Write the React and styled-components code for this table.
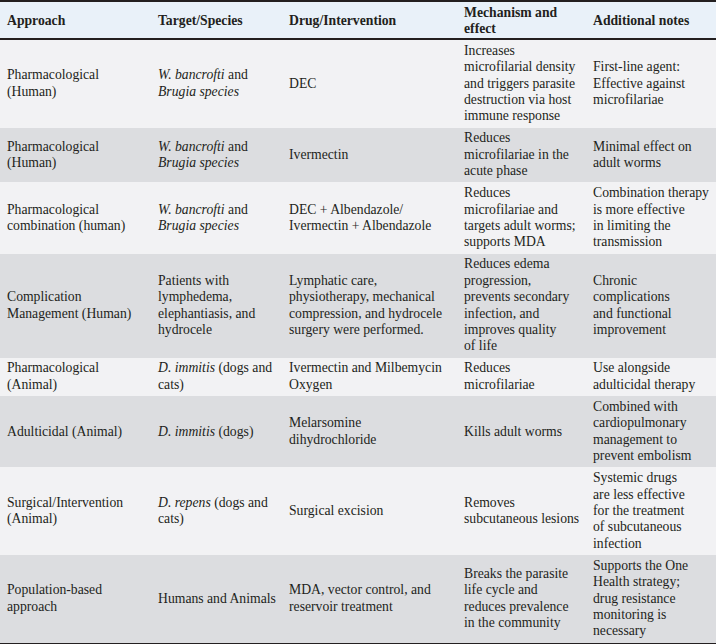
import React from "react";
import styled, { createGlobalStyle } from "styled-components";

const GlobalStyle = createGlobalStyle`
  html, body {
    margin: 0;
    padding: 0;
    background: #ffffff;
  }
`;

const COLUMNS = "151px 131px 175px 129px 130px";

const Table = styled.div`
  width: 716px;
  border-top: 2px solid #231f20;
  border-bottom: 3px solid #231f20;
  font-family: "Liberation Serif", "Times New Roman", Times, serif;
  font-size: 13.7px;
  line-height: 16.4px;
  color: #231f20;
`;

const HeadRow = styled.div`
  display: grid;
  grid-template-columns: ${COLUMNS};
  align-items: center;
  height: 36px;
  background: #e9f1f9;
  border-bottom: 2px solid #231f20;
  font-weight: 700;
`;

const Row = styled.div`
  display: grid;
  grid-template-columns: ${COLUMNS};
  align-items: center;
  background: ${props => (props.$shade ? "#dcdde0" : "#f2f2f4")};
`;

const Cell = styled.div`
  padding: 2.8px 7px;
  white-space: nowrap;
`;

const Em = styled.i`
  font-style: italic;
`;

const header = [
  "Approach",
  "Target/Species",
  "Drug/Intervention",
  <>Mechanism and<br />effect</>,
  "Additional notes",
];

const wb = (
  <>
    <Em>W. bancrofti</Em> and
    <br />
    <Em>Brugia species</Em>
  </>
);

const rows = [
  [
    <>Pharmacological<br />(Human)</>,
    wb,
    "DEC",
    <>Increases<br />microfilarial density<br />and triggers parasite<br />destruction via host<br />immune response</>,
    <>First-line agent:<br />Effective against<br />microfilariae</>,
  ],
  [
    <>Pharmacological<br />(Human)</>,
    wb,
    "Ivermectin",
    <>Reduces<br />microfilariae in the<br />acute phase</>,
    <>Minimal effect on<br />adult worms</>,
  ],
  [
    <>Pharmacological<br />combination (human)</>,
    wb,
    <>DEC + Albendazole/<br />Ivermectin + Albendazole</>,
    <>Reduces<br />microfilariae and<br />targets adult worms;<br />supports MDA</>,
    <>Combination therapy<br />is more effective<br />in limiting the<br />transmission</>,
  ],
  [
    <>Complication<br />Management (Human)</>,
    <>Patients with<br />lymphedema,<br />elephantiasis, and<br />hydrocele</>,
    <>Lymphatic care,<br />physiotherapy, mechanical<br />compression, and hydrocele<br />surgery were performed.</>,
    <>Reduces edema<br />progression,<br />prevents secondary<br />infection, and<br />improves quality<br />of life</>,
    <>Chronic<br />complications<br />and functional<br />improvement</>,
  ],
  [
    <>Pharmacological<br />(Animal)</>,
    <><Em>D. immitis</Em> (dogs and<br />cats)</>,
    <>Ivermectin and Milbemycin<br />Oxygen</>,
    <>Reduces<br />microfilariae</>,
    <>Use alongside<br />adulticidal therapy</>,
  ],
  [
    "Adulticidal (Animal)",
    <><Em>D. immitis</Em> (dogs)</>,
    <>Melarsomine<br />dihydrochloride</>,
    "Kills adult worms",
    <>Combined with<br />cardiopulmonary<br />management to<br />prevent embolism</>,
  ],
  [
    <>Surgical/Intervention<br />(Animal)</>,
    <><Em>D. repens</Em> (dogs and<br />cats)</>,
    "Surgical excision",
    <>Removes<br />subcutaneous lesions</>,
    <>Systemic drugs<br />are less effective<br />for the treatment<br />of subcutaneous<br />infection</>,
  ],
  [
    <>Population-based<br />approach</>,
    "Humans and Animals",
    <>MDA, vector control, and<br />reservoir treatment</>,
    <>Breaks the parasite<br />life cycle and<br />reduces prevalence<br />in the community</>,
    <>Supports the One<br />Health strategy;<br />drug resistance<br />monitoring is<br />necessary</>,
  ],
];

export default function App() {
  return (
    <>
      <GlobalStyle />
      <Table>
        <HeadRow>
          {header.map((h, i) => (
            <Cell key={i}>{h}</Cell>
          ))}
        </HeadRow>
        {rows.map((r, i) => (
          <Row key={i} $shade={i % 2 === 1}>
            {r.map((c, j) => (
              <Cell key={j}>{c}</Cell>
            ))}
          </Row>
        ))}
      </Table>
    </>
  );
}
